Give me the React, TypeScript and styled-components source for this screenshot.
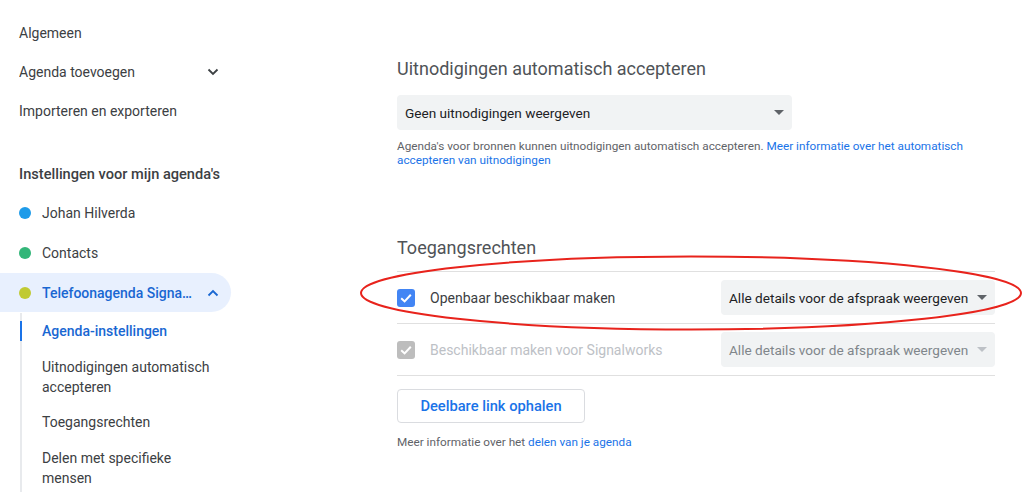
import React from "react"
import styled, { createGlobalStyle } from "styled-components"

const GlobalStyle = createGlobalStyle`
  html, body {
    margin: 0;
    padding: 0;
    background: #fff;
    font-family: Roboto, "Liberation Sans", Arial, sans-serif;
    color: #3c4043;
  }
`

const calendars = [
  { name: 'Johan Hilverda', color: '#1e9be9' },
  { name: 'Contacts', color: '#33b679' },
]

const subItems = [
  { label: 'Agenda-instellingen', active: true },
  { label: 'Uitnodigingen automatisch accepteren' },
  { label: 'Toegangsrechten' },
  { label: 'Delen met specifieke mensen' },
]

const ChevronDown = () => (
  <svg width="12" height="8" viewBox="0 0 12 8">
    <path d="M1.5 1.5 L6 6 L10.5 1.5" fill="none" stroke="currentColor" strokeWidth="1.8" />
  </svg>
)

const ChevronUp = () => (
  <svg width="12" height="8" viewBox="0 0 12 8">
    <path d="M1.5 6.5 L6 2 L10.5 6.5" fill="none" stroke="currentColor" strokeWidth="1.8" />
  </svg>
)

const Caret = () => (
  <svg width="10" height="5" viewBox="0 0 10 5">
    <path d="M0 0 L10 0 L5 5 Z" fill="currentColor" />
  </svg>
)

const Check = () => (
  <svg width="18" height="18" viewBox="0 0 18 18">
    <path d="M4.2 9.2 L7.6 12.4 L13.8 5.8" fill="none" stroke="#fff" strokeWidth="2" />
  </svg>
)

const Select: React.FC<{ label: string; width: number; disabled?: boolean }> = ({ label, width, disabled }) => (
  <SelectBox $width={width} $disabled={disabled}>
    <span>{label}</span>
    <Caret />
  </SelectBox>
)

const App: React.FC = () => {
  return <Page>
    <GlobalStyle />
    <Sidebar>
      <NavItem>Algemeen</NavItem>
      <NavItem>
        <NavLabel>Agenda toevoegen</NavLabel>
        <NavChevron><ChevronDown /></NavChevron>
      </NavItem>
      <NavItem>Importeren en exporteren</NavItem>
      <SectionTitle>Instellingen voor mijn agenda's</SectionTitle>
      {calendars.map(c => (
        <CalendarItem key={c.name}>
          <Dot $color={c.color} />
          <NavLabel>{c.name}</NavLabel>
        </CalendarItem>
      ))}
      <NavItem $active>
        <Dot $color="#c0ca33" />
        <NavLabel>Telefoonagenda Signalworks</NavLabel>
        <NavChevron><ChevronUp /></NavChevron>
      </NavItem>
      <SubList>
        {subItems.map(s => (
          <SubItem key={s.label} $active={s.active}>{s.label}</SubItem>
        ))}
      </SubList>
    </Sidebar>

    <Main>
      <Heading>Uitnodigingen automatisch accepteren</Heading>
      <Select label="Geen uitnodigingen weergeven" width={395} />
      <Help>
        Agenda's voor bronnen kunnen uitnodigingen automatisch accepteren. <A>Meer informatie over het automatisch accepteren van uitnodigingen</A>
      </Help>

      <Heading $spaced>Toegangsrechten</Heading>
      <Rows>
        <Row>
          <CheckBox><Check /></CheckBox>
          <RowLabel>Openbaar beschikbaar maken</RowLabel>
          <Select label="Alle details voor de afspraak weergeven" width={274} />
        </Row>
        <Row>
          <CheckBox $disabled><Check /></CheckBox>
          <RowLabel $disabled>Beschikbaar maken voor Signalworks</RowLabel>
          <Select label="Alle details voor de afspraak weergeven" width={274} disabled />
        </Row>
      </Rows>
      <LinkButton>Deelbare link ophalen</LinkButton>
      <Footnote>Meer informatie over het <A>delen van je agenda</A></Footnote>
    </Main>

    <Annotation width="1024" height="492" viewBox="0 0 1024 492">
      <ellipse cx="691" cy="293" rx="330" ry="36.5" fill="none" stroke="#e8231c" strokeWidth="2" />
    </Annotation>
  </Page>
}

const Page = styled.div`
  position: relative;
  display: flex;
  width: 1024px;
  height: 492px;
  overflow: hidden;
`

const Sidebar = styled.nav`
  width: 231px;
  flex-shrink: 0;
  padding-top: 13px;
  font-size: 14px;
`

const NavItem = styled.div<{ $active?: boolean }>`
  display: flex;
  align-items: center;
  height: 39px;
  padding: 0 12px 0 19px;
  box-sizing: border-box;
  border-radius: ${p => p.$active ? '0 20px 20px 0' : '0'};
  background: ${p => p.$active ? '#e8f0fe' : 'transparent'};
  color: ${p => p.$active ? '#1967d2' : '#3c4043'};
  font-weight: ${p => p.$active ? 500 : 400};
`

const CalendarItem = styled(NavItem)`
  height: 40px;
`

const NavLabel = styled.span`
  flex: 1;
  min-width: 0;
  white-space: nowrap;
  overflow: hidden;
  text-overflow: ellipsis;
  padding-right: 14px;
`

const NavChevron = styled.span`
  display: flex;
  width: 12px;
`

const SectionTitle = styled.div`
  display: flex;
  align-items: center;
  height: 39px;
  margin-top: 24px;
  padding-left: 19px;
  font-size: 14.6px;
  font-weight: 500;
  color: #3c4043;
`

const Dot = styled.span<{ $color: string }>`
  width: 12px;
  height: 12px;
  border-radius: 50%;
  background: ${p => p.$color};
  margin-right: 11px;
  flex-shrink: 0;
`

const SubList = styled.div`
  margin: 1px 0 0 20px;
  border-left: 2px solid #e8eaed;
`

const SubItem = styled.div<{ $active?: boolean }>`
  position: relative;
  padding: 8px 14px 7.5px 20px;
  line-height: 20px;
  color: ${p => p.$active ? '#1967d2' : '#3c4043'};
  font-weight: ${p => p.$active ? 500 : 400};
  &::before {
    content: '';
    display: ${p => p.$active ? 'block' : 'none'};
    position: absolute;
    left: -2px;
    top: 8px;
    width: 2px;
    height: 20px;
    background: #1a73e8;
  }
`

const Main = styled.main`
  margin-left: 166px;
  width: 598px;
  padding-top: 57px;
  display: flex;
  flex-direction: column;
  align-items: flex-start;
`

const Heading = styled.h2<{ $spaced?: boolean }>`
  margin: ${p => p.$spaced ? '69px 0 11px' : '0 0 14px'};
  font-size: 18px;
  line-height: 24px;
  font-weight: 400;
  color: #4f5357;
`

const SelectBox = styled.div<{ $width: number; $disabled?: boolean }>`
  display: flex;
  align-items: center;
  justify-content: space-between;
  width: ${p => p.$width}px;
  height: 35px;
  box-sizing: border-box;
  padding: 0 8px 0 8px;
  border-radius: 4px;
  background: #f1f3f4;
  font-size: 13.6px;
  white-space: nowrap;
  color: ${p => p.$disabled ? '#80868b' : '#202124'};
  svg { color: ${p => p.$disabled ? '#bdc1c6' : '#5f6368'}; flex-shrink: 0; }
`

const Help = styled.p`
  margin: 9px 0 0;
  font-size: 11.75px;
  line-height: 14px;
  color: #5f6368;
`

const A = styled.span`
  color: #1a73e8;
`

const Rows = styled.div`
  width: 598px;
  border-top: 1px solid #e0e0e0;
`

const Row = styled.div`
  display: flex;
  align-items: center;
  height: 51px;
  border-bottom: 1px solid #e0e0e0;
`

const CheckBox = styled.span<{ $disabled?: boolean }>`
  display: flex;
  width: 18px;
  height: 18px;
  border-radius: 3px;
  background: ${p => p.$disabled ? '#bdbdbd' : '#4285f4'};
  margin-right: 15px;
  flex-shrink: 0;
`

const RowLabel = styled.span<{ $disabled?: boolean }>`
  flex: 1;
  font-size: 14px;
  color: ${p => p.$disabled ? '#bdc1c6' : '#3c4043'};
`

const LinkButton = styled.button`
  margin-top: 13px;
  width: 188px;
  height: 34px;
  border: 1px solid #dadce0;
  border-radius: 4px;
  background: #fff;
  color: #1a73e8;
  font: 500 14.7px Roboto, "Liberation Sans", Arial, sans-serif;
  cursor: pointer;
`

const Footnote = styled.p`
  margin: 12px 0 0;
  font-size: 11.75px;
  line-height: 14px;
  color: #5f6368;
`

const Annotation = styled.svg`
  position: absolute;
  left: 0;
  top: 0;
  pointer-events: none;
`

export default App
